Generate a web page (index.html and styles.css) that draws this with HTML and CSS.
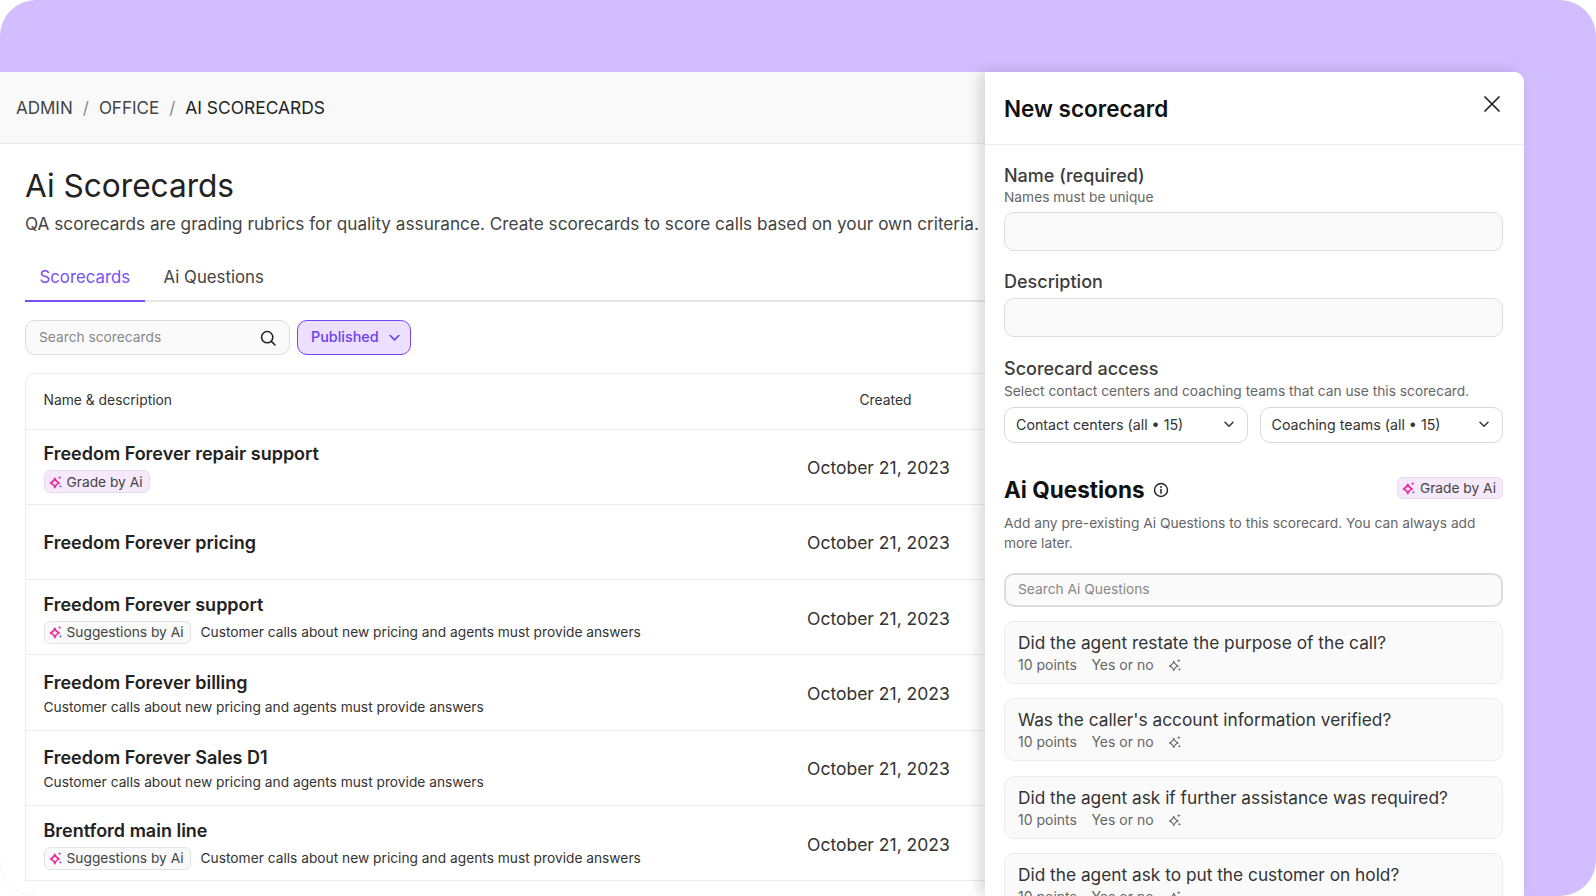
FILE: index.html
```html
<!DOCTYPE html>
<html lang="en">
<head>
<meta charset="utf-8">
<title>Ai Scorecards</title>
<link rel="stylesheet" href="styles.css">
</head>
<body>
<svg class="defs" width="0" height="0" aria-hidden="true">
  <symbol id="spark" viewBox="0 0 14 14">
    <path class="s-big" d="M5.8 3.2C6.3 5.8 7.1 6.8 10.2 7.9 7.1 9 6.3 10 5.8 12.6 5.3 10 4.5 9 1.4 7.9 4.5 6.8 5.3 5.8 5.8 3.2Z" fill="none" stroke-linejoin="round"/>
    <path class="s-top" d="M10.8.8c.2 1.3.6 1.7 1.9 1.9-1.3.2-1.7.6-1.9 1.9-.2-1.3-.6-1.7-1.9-1.9 1.3-.2 1.7-.6 1.9-1.9Z"/>
    <path class="s-bot" d="M11.4 9.6c.2 1.2.5 1.5 1.7 1.7-1.2.2-1.5.5-1.7 1.7-.2-1.2-.5-1.5-1.7-1.7 1.2-.2 1.5-.5 1.7-1.7Z"/>
  </symbol>
  <symbol id="chev" viewBox="0 0 12 12">
    <path d="M2 4.2 6 8.2l4-4" fill="none" stroke="currentColor" stroke-width="1.5" stroke-linecap="round" stroke-linejoin="round"/>
  </symbol>
</svg>
<div class="frame">
  <div class="app">
    <main class="main">
      <nav class="crumbs">
        <span>ADMIN</span><span class="sep">/</span><span>OFFICE</span><span class="sep">/</span><span class="cur">AI SCORECARDS</span>
      </nav>
      <div class="content">
        <h1 class="title">Ai Scorecards</h1>
        <p class="lead">QA scorecards are grading rubrics for quality assurance. Create scorecards to score calls based on your own criteria.</p>
        <div class="tabs">
          <span class="tab active">Scorecards</span>
          <span class="tab">Ai Questions</span>
        </div>
        <div class="filters">
          <div class="search">
            <span class="ph">Search scorecards</span>
            <svg class="search-ic" width="16" height="16" viewBox="0 0 16 16"><circle cx="7.2" cy="7.2" r="5.6" fill="none" stroke="currentColor" stroke-width="1.5"/><path d="M11.4 11.4 15 15" stroke="currentColor" stroke-width="1.5" stroke-linecap="round"/></svg>
          </div>
          <div class="pill"><span class="ph">Published</span> <svg class="chev-lg" width="13" height="13"><use href="#chev"/></svg></div>
        </div>
        <div class="table">
          <div class="thead"><span class="th-name">Name &amp; description</span><span class="th-created">Created</span></div>
          <div class="row">
            <div class="cell tagged">
              <div class="rname">Freedom Forever repair support</div>
              <div class="rsub"><span class="tag ai"><svg class="spark" width="14" height="14"><use href="#spark"/></svg>Grade by Ai</span></div>
            </div>
            <div class="date">October 21, 2023</div>
          </div>
          <div class="row">
            <div class="cell">
              <div class="rname">Freedom Forever pricing</div>
            </div>
            <div class="date">October 21, 2023</div>
          </div>
          <div class="row">
            <div class="cell tagged">
              <div class="rname">Freedom Forever support</div>
              <div class="rsub"><span class="tag grey"><svg class="spark" width="14" height="14"><use href="#spark"/></svg>Suggestions by Ai</span><span class="desc">Customer calls about new pricing and agents must provide answers</span></div>
            </div>
            <div class="date">October 21, 2023</div>
          </div>
          <div class="row">
            <div class="cell described">
              <div class="rname">Freedom Forever billing</div>
              <div class="rsub"><span class="desc">Customer calls about new pricing and agents must provide answers</span></div>
            </div>
            <div class="date">October 21, 2023</div>
          </div>
          <div class="row">
            <div class="cell described">
              <div class="rname">Freedom Forever Sales D1</div>
              <div class="rsub"><span class="desc">Customer calls about new pricing and agents must provide answers</span></div>
            </div>
            <div class="date">October 21, 2023</div>
          </div>
          <div class="row">
            <div class="cell tagged">
              <div class="rname">Brentford main line</div>
              <div class="rsub"><span class="tag grey"><svg class="spark" width="14" height="14"><use href="#spark"/></svg>Suggestions by Ai</span><span class="desc">Customer calls about new pricing and agents must provide answers</span></div>
            </div>
            <div class="date">October 21, 2023</div>
          </div>
        </div>
      </div>
    </main>
    <aside class="panel">
      <header class="panel-head">
        <h2>New scorecard</h2>
        <svg class="close" width="16" height="16" viewBox="0 0 16 16"><path d="M1 1l14 14M15 1 1 15" stroke="currentColor" stroke-width="1.7" stroke-linecap="round"/></svg>
      </header>
      <div class="panel-body">
        <div class="label">Name (required)</div>
        <div class="help">Names must be unique</div>
        <div class="input first"></div>
        <div class="label l-desc">Description</div>
        <div class="input second"></div>
        <div class="label l-access">Scorecard access</div>
        <div class="help access-help">Select contact centers and coaching teams that can use this scorecard.</div>
        <div class="selects">
          <div class="select">Contact centers (all • 15)<svg class="chev" width="12" height="12"><use href="#chev"/></svg></div>
          <div class="select">Coaching teams (all • 15)<svg class="chev" width="12" height="12"><use href="#chev"/></svg></div>
        </div>
        <div class="q-head">
          <h3>Ai Questions</h3>
          <svg class="info" width="16" height="16" viewBox="0 0 16 16"><circle cx="8" cy="8" r="6.5" fill="none" stroke="currentColor" stroke-width="1.4"/><path d="M8 7.4v3.8" stroke="currentColor" stroke-width="1.5" stroke-linecap="round"/><circle cx="8" cy="5" r=".95" fill="currentColor"/></svg>
          <span class="tag ai q-tag"><svg class="spark" width="14" height="14"><use href="#spark"/></svg>Grade by Ai</span>
        </div>
        <p class="q-help">Add any pre-existing Ai Questions to this scorecard. You can always add more later.</p>
        <div class="q-search"><span class="ph">Search Ai Questions</span></div>
        <div class="qcards">
          <div class="qcard"><div class="qtitle">Did the agent restate the purpose of the call?</div><div class="qmeta"><span>10 points</span><span>Yes or no</span><svg class="spark mono" width="14" height="14"><use href="#spark"/></svg></div></div>
          <div class="qcard"><div class="qtitle">Was the caller's account information verified?</div><div class="qmeta"><span>10 points</span><span>Yes or no</span><svg class="spark mono" width="14" height="14"><use href="#spark"/></svg></div></div>
          <div class="qcard"><div class="qtitle">Did the agent ask if further assistance was required?</div><div class="qmeta"><span>10 points</span><span>Yes or no</span><svg class="spark mono" width="14" height="14"><use href="#spark"/></svg></div></div>
          <div class="qcard"><div class="qtitle">Did the agent ask to put the customer on hold?</div><div class="qmeta"><span>10 points</span><span>Yes or no</span><svg class="spark mono" width="14" height="14"><use href="#spark"/></svg></div></div>
        </div>
      </div>
    </aside>
  </div>
</div>
</body>
</html>
```
FILE: styles.css
```css
* { box-sizing: border-box; }
html, body { margin: 0; height: 100%; background: #fff; overflow: hidden; }
body { font-family: Inter, "Noto Sans", sans-serif; color: #222; }
h1, h2, h3, p { margin: 0; }
.defs { position: absolute; }

.frame { width: 1596px; height: 896px; background: #d2bdfe; border-radius: 36px; overflow: hidden; padding: 72px 72px 0 0; }
.app { position: relative; width: 1524px; height: 824px; }
.main { height: 100%; background: #fff; overflow: hidden; border-top-right-radius: 10px; }

.crumbs { height: 72px; background: #f9f9f9; border-bottom: 1.5px solid #e8e8e8; display: flex; align-items: center; padding: 0 0 0 16px; font-size: 17px; line-height: 22px; color: #444; }
.crumbs .sep { margin: 0 10px; color: #888; }
.crumbs .cur { color: #222; font-size: 17.4px; }

.content { padding: 0 0 0 25px; }
.title { font-size: 31.6px; line-height: 40px; font-weight: 400; color: #222; margin: 22px 0 0 0; }
.lead { font-size: 17.2px; line-height: 24px; color: #444; white-space: nowrap; margin: 5.5px 0 0 0; }

.tabs { display: flex; height: 47px; margin-top: 19.5px; border-bottom: 2px solid #e6e6e6; width: 1500px; }
.tab { font-size: 16.8px; line-height: 24px; padding: 10px 14.5px 0; color: #444; height: 47px; }
.tab.active { color: #7a4ff5; border-bottom: 2px solid #7a4ff5; margin-right: 4.5px; }

.filters { display: flex; gap: 7px; margin-top: 18px; }
.ph { padding-bottom: 2px; }
.search { width: 265px; height: 35px; border: 1.5px solid #dcdcdc; border-radius: 10px; background: #fafafa; display: flex; align-items: center; justify-content: space-between; padding: 0 13px; font-size: 13.75px; color: #888; }
.search-ic { color: #222; }
.pill { width: 114px; height: 35px; border: 1.5px solid #6f47f5; border-radius: 10px; background: #ede0ff; display: flex; align-items: center; gap: 9px; padding: 0 12px 0 13px; font-size: 14.35px; font-weight: 500; color: #6b40f0; }
.chev-lg { color: #6b40f0; flex: none; }

.table { width: 1480px; margin-top: 18px; border: 1.5px solid #ececec; border-bottom: 0; border-radius: 10px 10px 0 0; }
.thead { height: 55.5px; display: flex; align-items: center; padding: 0 0 2px 17.5px; font-size: 13.85px; color: #333; border-bottom: 1.5px solid #ececec; }
.th-name { width: 816px; }
.row { height: 75.33px; display: flex; align-items: center; padding-left: 17.5px; border-bottom: 1.5px solid #ececec; }
.cell { width: 763.5px; display: flex; flex-direction: column; padding-top: 3px; }
.cell.described { padding-top: 4px; }
.rname { font-size: 18px; line-height: 22px; font-weight: 600; color: #222; }
.rsub { display: flex; align-items: center; gap: 10px; }
.tagged .rsub { margin-top: 5px; }
.described .rsub { margin-top: 3px; }
.desc { font-size: 13.75px; line-height: 20px; color: #333; }
.date { font-size: 17.5px; line-height: 24px; color: #333; padding-top: 3px; }

.tag { display: inline-flex; align-items: center; gap: 4px; height: 23px; border-radius: 6px; padding: 0 6px 0 4px; font-size: 13.75px; color: #444; border: 1px solid; white-space: nowrap; }
.tag.ai { background: #f6e9fb; border-color: #e6dcec; }
.tag.grey { background: #f9f9f9; border-color: #e3e3e3; }
.spark { flex: none; --big: #f02d9c; --small: #7a4ff5; --bw: 1.6; }
.spark.mono { --big: #666; --small: #666; --bw: 1.1; }
.s-big { stroke: var(--big); stroke-width: var(--bw); }
.s-top { fill: var(--big); }
.s-bot { fill: var(--small); }

.panel { position: absolute; top: 0; left: 985px; right: 0; bottom: 0; background: #fff; border-radius: 0 10px 0 0; box-shadow: -6px 0 14px rgba(0,0,0,.14); overflow: hidden; }
.panel-head { height: 73px; border-bottom: 1.5px solid #ececec; padding: 0 19px; position: relative; }
.panel-head h2 { font-size: 22.5px; line-height: 28px; font-weight: 600; color: #111; padding-top: 22.5px; }
.close { position: absolute; right: 24px; top: 24px; color: #222; }

.panel-body { padding: 0 21px 0 19px; }
.label { font-size: 18px; line-height: 22px; font-weight: 500; color: #3c3c3c; padding-top: 20px; }
.help { font-size: 13.75px; line-height: 20px; color: #666; }
.input { height: 39px; background: #fafafa; border: 1.5px solid #ddd; border-radius: 10px; margin-top: 5px; }
.label.l-access { padding-top: 21px; }
.access-help { margin-top: 1px; }
.selects { display: flex; gap: 12px; margin-top: 6px; }
.select { flex: 1; height: 36px; border: 1.5px solid #d8d8d8; border-radius: 10px; display: flex; align-items: center; justify-content: space-between; padding: 0 12px 2px 11px; font-size: 14.25px; color: #333; }
.select .chev { color: #333; }

.q-head { display: flex; align-items: center; margin-top: 34px; height: 26px; }
.q-head h3 { font-size: 22.5px; line-height: 26px; font-weight: 700; color: #111; }
.info { margin-left: 8px; color: #222; }
.q-tag { margin-left: auto; margin-top: -4px; height: 22px; }
.q-help { font-size: 13.75px; line-height: 20px; color: #666; margin-top: 10px; }
.q-search { height: 34px; margin-top: 20px; border: 2px solid #dcdcdc; border-radius: 10px; background: #fafafa; display: flex; align-items: center; padding: 0 12px; font-size: 13.75px; color: #888; }
.qcards { display: flex; flex-direction: column; gap: 14.6px; margin-top: 13.5px; }
.qcard { height: 63px; background: #fafafa; border: 1.5px solid #ececec; border-radius: 10px; padding: 9px 12px 0 13px; }
.qtitle { font-size: 17.3px; line-height: 24px; color: #333; }
.qmeta { display: flex; align-items: center; gap: 14.5px; font-size: 14px; line-height: 20px; color: #666; }
.qmeta .spark { margin-left: 0; }
```
